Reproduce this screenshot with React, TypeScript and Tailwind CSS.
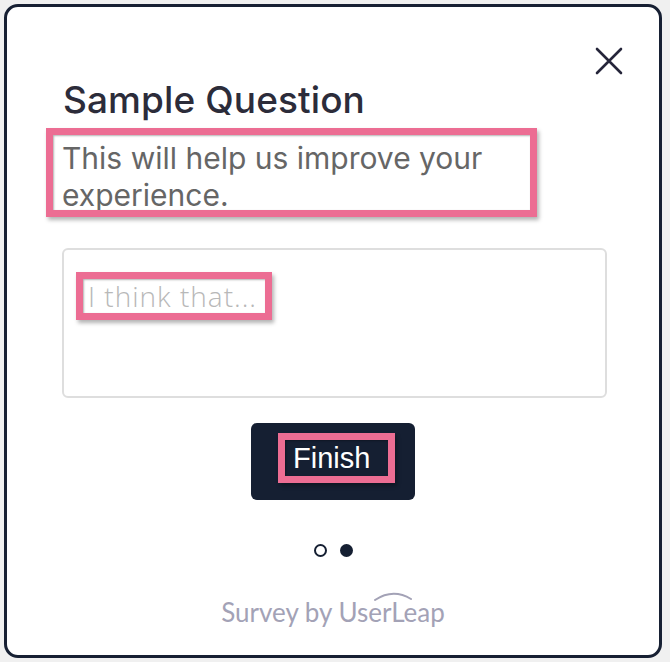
import React from "react";

const pinkBox =
  "border-[7px] border-[#ec6d93] shadow-[2px_3px_4px_rgba(0,0,0,0.3),inset_1px_1px_2px_rgba(0,0,0,0.3)]";

export default function App() {
  return (
    <div className="w-[670px] h-[662px] bg-[#f0f0f0] pl-[4px] pt-[4px]">
      <div className="relative w-[658px] h-[654px] bg-white border-[3px] border-[#172033] rounded-[14px] px-[55px] flex flex-col">
        <button className="absolute right-[36px] top-[40px] w-[28px] h-[28px]">
          <svg width="28" height="28" viewBox="0 0 28 28">
            <path d="M2 2 L26 26 M26 2 L2 26" stroke="#25253a" strokeWidth="2.6" strokeLinecap="round" />
          </svg>
        </button>

        <h1
          className="mt-[75px] ml-px text-[37px] leading-[36px] font-medium text-[#2c2c3a] tracking-[0.1px]"
          style={{ fontFamily: 'Inter, "Liberation Sans", sans-serif' }}
        >
          Sample Question
        </h1>

        <div className={`mt-[10px] -ml-[16px] w-[491px] h-[89px] overflow-hidden pl-[9px] pt-[5px] ${pinkBox}`}>
          <p
            className="text-[30px] leading-[37px] text-[#666666]"
            style={{ fontFamily: 'Inter, "Liberation Sans", sans-serif' }}
          >
            This will help us improve your experience.
          </p>
        </div>

        <div className="mt-[31px] w-[545px] h-[150px] border-2 border-[#dedede] rounded-[6px] pl-[12px] pt-[22px]">
          <div className={`inline-flex items-center h-[48px] w-[196px] pl-[5px] ${pinkBox}`}>
            <span
              className="text-[28px] leading-[30px] text-[#b8b8b8] font-light tracking-[1px] whitespace-nowrap"
              style={{ fontFamily: '"Open Sans", "Noto Sans", sans-serif' }}
            >
              I think that...
            </span>
          </div>
        </div>

        <div className="mt-[25px] flex justify-center">
          <div className="w-[164px] h-[77px] bg-[#151f32] rounded-[6px] pl-[27px] pt-[10px]">
            <div className={`w-[117px] h-[50px] flex items-center pl-[8px] ${pinkBox}`}>
              <span
                className="text-white text-[29px] leading-[32px]"
                style={{ fontFamily: '"Liberation Sans", Arial, sans-serif' }}
              >
                Finish
              </span>
            </div>
          </div>
        </div>

        <div className="mt-[44px] flex justify-center gap-[13px]">
          <span className="w-[13px] h-[13px] rounded-full border-2 border-[#151f32] bg-white" />
          <span className="w-[13px] h-[13px] rounded-full bg-[#151f32]" />
        </div>

        <div className="mt-[40px] flex justify-center">
          <div
            className="relative text-[26px] leading-[30px] text-[#a3a2b6]"
            style={{ fontFamily: 'Lato, "Open Sans", sans-serif' }}
          >
            Survey by UserLeap
            <svg className="absolute left-[152px] top-[-7px]" width="40" height="12" viewBox="0 0 40 12">
              <path d="M2 10 Q20 -2 38 9" stroke="#a3a2b6" strokeWidth="2" fill="none" strokeLinecap="round" />
            </svg>
          </div>
        </div>
      </div>
    </div>
  );
}
